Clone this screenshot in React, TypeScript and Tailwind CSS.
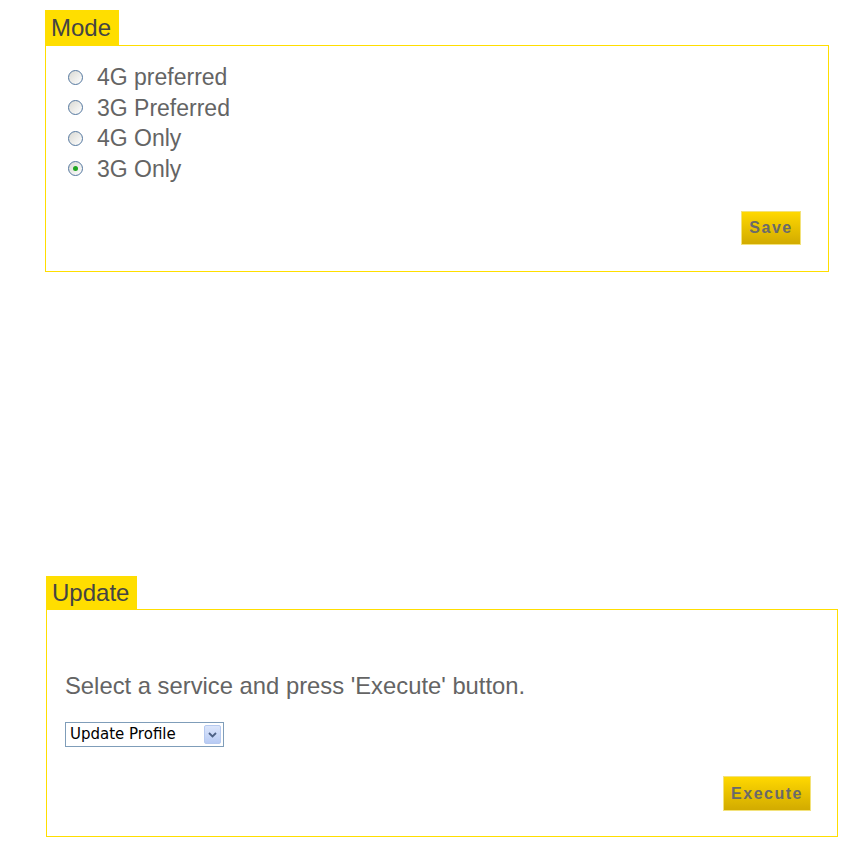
import React from "react";

function Radio({ checked }: { checked?: boolean }) {
  return (
    <span className="inline-flex h-[15px] w-[15px] shrink-0 items-center justify-center rounded-full border-[1.5px] border-[#55789f] bg-gradient-to-br from-[#d9d9d3] to-[#ffffff]">
      {checked && <span className="h-[5px] w-[5px] rounded-full bg-[#1fa51f]" />}
    </span>
  );
}

function YButton({ label, w, h }: { label: string; w: string; h: string }) {
  return (
    <button
      className={`${w} ${h} border border-[#f3e27a] bg-gradient-to-b from-[#ffd800] to-[#d2ab00] text-[16px] font-bold tracking-[1.5px] text-[#6a6a6a]`}
      style={{ fontFamily: '"Liberation Sans", Arial, sans-serif' }}
    >
      {label}
    </button>
  );
}

export default function App() {
  const options = ["4G preferred", "3G Preferred", "4G Only", "3G Only"];
  return (
    <div
      className="min-h-[848px] w-[860px] bg-white pt-[10px]"
      style={{ fontFamily: '"Liberation Sans", Arial, sans-serif' }}
    >
      <div className="ml-[45px] flex w-[784px] flex-col">
        <div className="flex h-[35px] w-[74px] items-center bg-[#ffde00] pl-[6px] text-[24px] leading-none text-[#444444]">
          Mode
        </div>
        <div className="flex h-[227px] flex-col border border-[#ffde00] pl-[22px] pr-[27px] pt-[16px]">
          <div className="flex flex-col">
            {options.map((o, i) => (
              <label key={o} className="flex h-[30.5px] items-center gap-[14px] text-[23px] text-[#646464]">
                <Radio checked={i === 3} />
                <span>{o}</span>
              </label>
            ))}
          </div>
          <div className="mt-[27px] flex justify-end">
            <YButton label="Save" w="w-[60px]" h="h-[34px]" />
          </div>
        </div>
      </div>

      <div className="ml-[46px] mt-[304px] flex w-[792px] flex-col">
        <div className="flex h-[33px] w-[91px] items-center bg-[#ffde00] pl-[6px] text-[24px] leading-none text-[#444444]">
          Update
        </div>
        <div className="flex h-[228px] flex-col border border-[#ffde00] pl-[18px] pr-[26px] pt-[63px]">
          <div className="text-[23.8px] leading-[26px] text-[#646464]">
            Select a service and press 'Execute' button.
          </div>
          <div className="mt-[23px] flex h-[25px] w-[159px] items-center border border-[#7f9db9] bg-white pl-[4px] pr-[2px]">
            <span className="flex-1 text-black" style={{ fontFamily: '"DejaVu Sans", Arial, sans-serif', fontSize: "15px" }}>
              Update Profile
            </span>
            <span className="flex h-[19px] w-[17px] items-center justify-center rounded-[2px] border border-[#b6c9ef] bg-gradient-to-b from-[#dce6fb] to-[#b8cbf4]">
              <svg width="9" height="6" viewBox="0 0 9 6">
                <path d="M1 1 L4.5 4.5 L8 1" fill="none" stroke="#4d6185" strokeWidth="1.8" />
              </svg>
            </span>
          </div>
          <div className="mt-[29px] flex justify-end">
            <YButton label="Execute" w="w-[88px]" h="h-[35px]" />
          </div>
        </div>
      </div>
    </div>
  );
}
